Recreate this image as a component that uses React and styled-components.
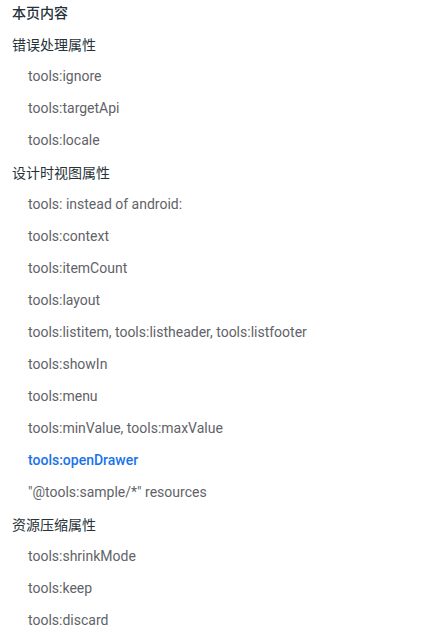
import React from 'react';
import styled, { createGlobalStyle } from 'styled-components';

const GlobalStyle = createGlobalStyle`
  body {
    margin: 0;
    background: #fff;
    font-family: Roboto, "Noto Sans CJK SC", sans-serif;
  }
`;

const Page = styled.nav`
  position: relative;
  width: 428px;
  height: 636px;
  overflow: hidden;
  padding: 0 12px;
  box-sizing: border-box;
`;

const List = styled.ul`
  list-style: none;
  margin: -4px 0 0;
  padding: 0;
`;

const Row = styled.li`
  height: 32px;
  display: flex;
  align-items: center;
  padding-left: ${(p) => (p.$sub ? '16px' : '0')};
  font-size: 14px;
  white-space: nowrap;
  color: ${(p) => (p.$active ? '#1a73e8' : p.$sub ? '#5f6368' : '#263238')};
  font-weight: ${(p) => (p.$title || p.$active ? 500 : 400)};
  font-family: ${(p) => (p.$sub ? 'Roboto, sans-serif' : '"Noto Sans CJK SC", sans-serif')};
`;

const Mark = styled.span`
  position: absolute;
  font-family: "Noto Sans CJK SC", sans-serif;
  font-size: 22px;
  font-style: italic;
  color: rgba(0, 0, 0, 0.025);
  transform: rotate(-22deg);
  pointer-events: none;
  white-space: nowrap;
`;

const rows = [
  { text: '本页内容', title: true },
  { text: '错误处理属性' },
  { text: 'tools:ignore', sub: true },
  { text: 'tools:targetApi', sub: true },
  { text: 'tools:locale', sub: true },
  { text: '设计时视图属性' },
  { text: 'tools: instead of android:', sub: true },
  { text: 'tools:context', sub: true },
  { text: 'tools:itemCount', sub: true },
  { text: 'tools:layout', sub: true },
  { text: 'tools:listitem, tools:listheader, tools:listfooter', sub: true },
  { text: 'tools:showIn', sub: true },
  { text: 'tools:menu', sub: true },
  { text: 'tools:minValue, tools:maxValue', sub: true },
  { text: 'tools:openDrawer', sub: true, active: true },
  { text: '"@tools:sample/*" resources', sub: true },
  { text: '资源压缩属性' },
  { text: 'tools:shrinkMode', sub: true },
  { text: 'tools:keep', sub: true },
  { text: 'tools:discard', sub: true },
];

const marks = [
  { text: '涂鸦智能-3668', x: 50, y: 236 },
  { text: '涂鸦智能', x: 336, y: 250 },
  { text: '涂鸦智能-3668', x: 50, y: 526 },
  { text: '涂鸦智能', x: 336, y: 540 },
];

export default function App() {
  return (
    <>
      <GlobalStyle />
      <Page>
        <List>
          {rows.map((r, i) => (
            <Row key={i} $sub={r.sub} $title={r.title} $active={r.active}>
              {r.text}
            </Row>
          ))}
        </List>
        {marks.map((m, i) => (
          <Mark key={i} style={{ left: m.x, top: m.y }}>
            {m.text}
          </Mark>
        ))}
      </Page>
    </>
  );
}
